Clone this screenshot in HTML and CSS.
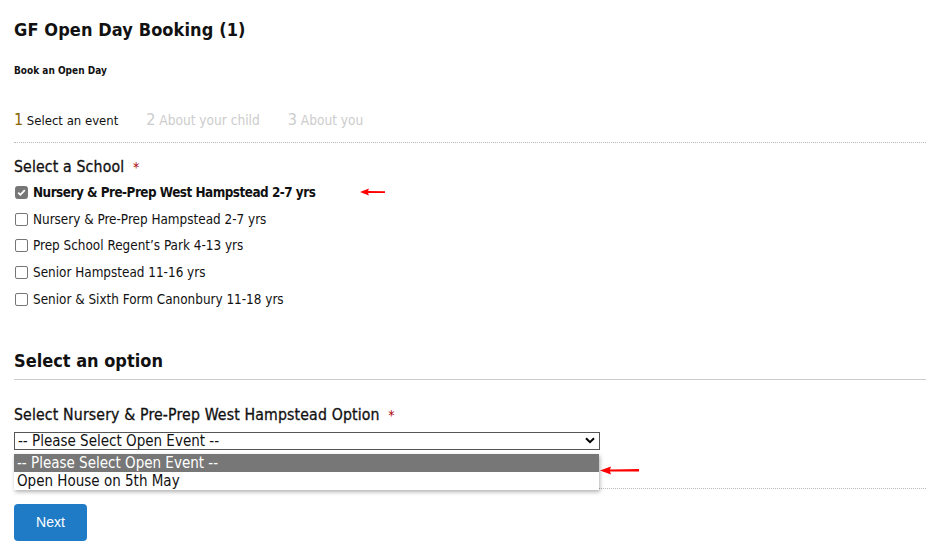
FILE: index.html
```html
<!DOCTYPE html>
<html>
<head>
<meta charset="utf-8">
<link rel="stylesheet" href="styles.css">
</head>
<body>
<div class="page">
  <h1 class="title">GF Open Day Booking (1)</h1>
  <p class="subtitle">Book an Open Day</p>
  <div class="steps">
    <span class="step active"><span class="num">1</span> Select an event</span>
    <span class="step"><span class="num">2</span> About your child</span>
    <span class="step"><span class="num">3</span> About you</span>
  </div>
  <div class="field">
    <div class="label">Select a School <span class="req">*</span></div>
    <ul class="checks">
      <li class="check checked"><span class="box"><svg viewBox="0 0 13 13" width="13" height="13"><rect x="0.5" y="0.5" width="12" height="12" rx="2" fill="#767676" stroke="#767676"/><path d="M3.2 6.6 L5.4 8.8 L9.8 4.2" fill="none" stroke="#fff" stroke-width="1.8"/></svg></span><span class="text">Nursery &amp; Pre-Prep West Hampstead 2-7 yrs</span><span class="arrow arrow1"><svg width="26" height="8" viewBox="0 0 26 8"><path d="M0 4 L9 0.5 L8 3 L25 3.2 L25 5 L8 5 L9 7.5 Z" fill="#f00"/></svg></span></li>
      <li class="check"><span class="box"></span><span class="text">Nursery &amp; Pre-Prep Hampstead 2-7 yrs</span></li>
      <li class="check"><span class="box"></span><span class="text">Prep School Regent’s Park 4-13 yrs</span></li>
      <li class="check"><span class="box"></span><span class="text">Senior Hampstead 11-16 yrs</span></li>
      <li class="check"><span class="box"></span><span class="text">Senior &amp; Sixth Form Canonbury 11-18 yrs</span></li>
    </ul>
  </div>
  <h2 class="section">Select an option</h2>
  <div class="field option">
    <div class="label">Select Nursery &amp; Pre-Prep West Hampstead Option <span class="req">*</span></div>
    <div class="selectwrap">
      <div class="select">
        <span>-- Please Select Open Event --</span>
        <svg class="chev" width="10" height="7" viewBox="0 0 10 7"><path d="M1 1.2 L5 5.2 L9 1.2" fill="none" stroke="#000" stroke-width="2"/></svg>
      </div>
      <ul class="dropdown">
        <li class="opt hi">-- Please Select Open Event --</li>
        <li class="opt">Open House on 5th May</li>
      </ul>
      <span class="arrow arrow2"><svg width="40" height="9" viewBox="0 0 40 9"><path d="M0 4.5 L11 0.5 L10 3.5 L39 3 L39 5.5 L10 5.5 L11 8.5 Z" fill="#f00"/></svg></span>
    </div>
    <div class="rule-dotted"></div>
  </div>
  <button class="next">Next</button>
</div>
</body>
</html>
```
FILE: styles.css
```css
* { box-sizing: border-box; }
html, body { margin: 0; padding: 0; background: #fff; }
body { font-family: "DejaVu Sans Condensed", "DejaVu Sans", sans-serif; font-stretch: condensed; color: #111; }
.page { padding: 0 0 0 14px; }
.title { margin: 0; padding-top: 19px; font-size: 18px; font-weight: bold; line-height: 22px; letter-spacing: 0.1px; }
.subtitle { margin: 0; padding-top: 23px; font-size: 10px; font-weight: bold; line-height: 14px; }
.steps { display: flex; padding-top: 32px; height: 65px; border-bottom: 1px dotted #bbb; font-size: 13px; line-height: 20px; color: #ccc; }
.step { margin-right: 28px; font-size: 13.6px; }
.step .num { font-size: 16px; }
.step.active { color: #111; font-size: 13px; }
.step.active .num { color: #8a6400; }
.field { padding-top: 14px; }
.label { font-size: 15.7px; color: #111; line-height: 20px; letter-spacing: 0.15px; -webkit-text-stroke: 0.3px #111; }
.req { color: #a00; margin-left: 4px; -webkit-text-stroke: 0; font-size: 14px; }
.checks { list-style: none; margin: 2px 0 0 0; padding: 0; }
.check { display: flex; align-items: center; height: 26.75px; font-size: 13.4px; position: relative; }
.check .box { width: 13px; height: 13px; margin-left: 1px; margin-right: 5px; border: 1px solid #767676; border-radius: 2px; background: #fff; display: inline-block; }
.check.checked .box { border: none; }
.check.checked .box svg { display: block; }
.check.checked .text { font-weight: bold; letter-spacing: -0.5px; }
.arrow { position: absolute; display: block; line-height: 0; }
.arrow1 { left: 346px; top: 9px; }
.section { margin: 36px 0 0 0; font-size: 18px; font-weight: bold; line-height: 24px; padding-bottom: 6px; border-bottom: 1px solid #ccc; }
.option { padding-top: 25px; }
.selectwrap { position: relative; margin-top: 7px; width: 586px; }
.select { height: 18px; border: 1px solid #555; display: flex; align-items: center; justify-content: space-between; padding: 0 4px 0 3px; font-size: 15px; }
.chev { display: block; }
.dropdown { position: absolute; left: 0; top: 22px; width: 585px; margin: 0; padding: 0; list-style: none; background: #fff; box-shadow: 1px 2px 4px rgba(0,0,0,0.3); font-size: 15px; z-index: 2; }
.opt { height: 18px; line-height: 18px; padding-left: 3px; }
.opt.hi { background: #777; color: #fff; }
.arrow2 { left: 586px; top: 34px; }
.rule-dotted { margin-top: 38px; border-bottom: 1px dotted #bbb; }
.next { display: block; margin-top: 15px; width: 73px; height: 37px; border: none; border-radius: 4px; background: #1f7bc6; color: #fff; font-family: "Liberation Sans", Arial, sans-serif; font-size: 14px; padding: 0; }
```
